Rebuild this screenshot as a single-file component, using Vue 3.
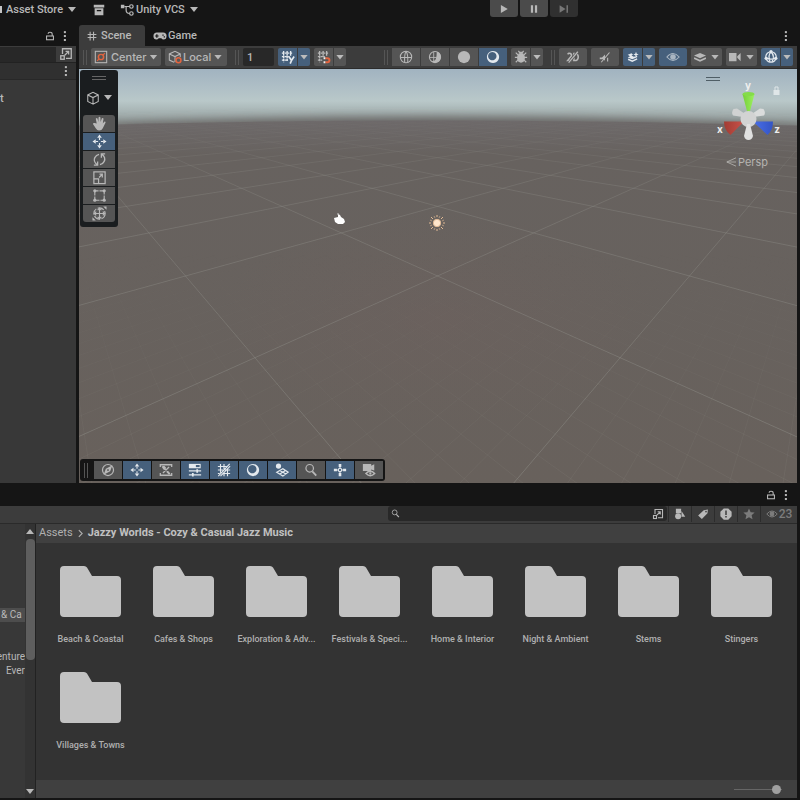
<script setup>
import { ref } from 'vue'

const icons = {
  archive: '<path fill="currentColor" d="M2 2h12v3H2zM3 6h10v8H3z"/><path stroke="#151515" stroke-width="1.5" d="M5.5 8.7h5"/>',
  branch: '<rect x="1" y="2" width="4" height="4" fill="currentColor"/><g fill="none" stroke="currentColor" stroke-width="1.4"><path d="M5 4h6M7 4v4q0 4 4 4"/><circle cx="13" cy="4" r="2"/><circle cx="13" cy="12" r="2"/></g>',
  play: '<path fill="currentColor" d="M3 1.500 14 8 3 14.500z"/>',
  pause: '<path fill="currentColor" d="M3 2h3.500v12H3zM9.500 2H13v12H9.500z"/>',
  step: '<path fill="currentColor" d="M1 2l9.500 6L1 14zM12 2h2.300v12H12z"/>',
  lock: '<g fill="none" stroke="currentColor" stroke-width="1.700"><rect x="2.500" y="8" width="11" height="6"/><path d="M5 4.500Q5 2 8 2q3.500 0 3.500 3v3"/></g>',
  dots: '<g fill="currentColor"><rect x="6.500" y="1.500" width="2.700" height="2.700"/><rect x="6.500" y="6.700" width="2.700" height="2.700"/><rect x="6.500" y="12" width="2.700" height="2.700"/></g>',
  picker: '<g fill="none" stroke="currentColor" stroke-width="1.500"><path d="M4 8V2h10v11H8"/><rect x="2" y="10" width="4" height="4"/><path d="M6.500 9.500 11 5M7.500 5H11v3.700"/></g>',
  hash: '<path stroke="currentColor" stroke-width="1.700" d="M5 1v14M10.500 1v14M1 5.500h14M1 10.500h14"/>',
  pad: '<path fill="currentColor" fill-rule="evenodd" d="M4.500 4h7q4 0 4 4 0 4-3.500 4-1.500 0-2.500-1.500h-3Q5.500 12 4 12 .5 12 .5 8q0-4 4-4zM3.700 6v1.300H2.500v1.400h1.200V10h1.400V8.700h1.300V7.300H5.100V6zm7 .3v1.500h1.500V6.300zm1.500 2v1.500h1.500V8.300z"/>',
  center: '<rect x="1.500" y="1.500" width="13" height="13" fill="none" stroke="currentColor" stroke-width="1.200"/><circle cx="8" cy="8" r="3" fill="none" stroke="#e2643f" stroke-width="1.700"/><path stroke="#e2643f" stroke-width="1.300" d="M3.500 12.500 6 10M10 6l2.500-2.500"/>',
  local: '<path fill="none" stroke="currentColor" stroke-width="1.200" d="M7 14 1.500 11.500v-7L8 1.500l6 3V8M1.500 4.500 8 7.500l6-3M8 7.500V14"/><circle cx="12" cy="11.700" r="2.800" fill="#585858" stroke="#e2643f" stroke-width="1.700"/>',
  cube: '<path fill="none" stroke="currentColor" stroke-width="1.200" d="M8 15 2 12V4.500L8 1.500l6 3V12zM2 4.500l6 3 6-3M8 7.500V15"/>',
  gridY: '<path stroke="currentColor" stroke-width="1.500" stroke-dasharray="2.400 .7" d="M3 1v13M7 1v12M11 1v6M1 3.500h12M1 7.500h8M1 11.500h7"/><path fill="none" stroke="currentColor" stroke-width="1.900" d="M9 7.500l3 4.500 3-4.500M12 12l-1.500 3.500"/>',
  magnet: '<path stroke="currentColor" stroke-width="1.500" stroke-dasharray="2.400 .7" d="M3 1v13M7 1v7M11 1v6M1 3.500h12M1 7.500h8M1 11.500h5"/><path fill="none" stroke="#e2643f" stroke-width="2.300" d="M9.500 9.500H12q2.200 0 2.200 2.200T12 14H9.500"/><path stroke="#eee" stroke-width="2.200" d="M7.500 9.500h2M7.500 14h2"/>',
  wire: '<g fill="none" stroke="currentColor" stroke-width="1.200"><circle cx="8" cy="8" r="6.500"/><path d="M8 1.500Q6 5 6.500 14M1.500 8.500h13M8 1.500q2.500 3 2 12.500"/></g>',
  shadedWire: '<circle cx="8" cy="8" r="6.400" fill="none" stroke="currentColor" stroke-width="1.200"/><path fill="currentColor" d="M10 2q5 1 4.500 7-1 5-6.500 5.500L3 13q5 0 6-3t1-8z"/><path stroke="currentColor" d="M1.500 8.500H10M6.500 2v12"/>',
  ball: '<circle cx="8" cy="8" r="7" fill="currentColor"/>',
  moon: '<path fill="currentColor" fill-rule="evenodd" d="M8 1a7 7 0 1 0 .01 0zM7.200 2.200a4.800 4.800 0 1 1-.01 0z"/>',
  bug: '<ellipse cx="8" cy="9" rx="4.500" ry="5.500" fill="currentColor"/><path fill="currentColor" d="M5 4h6L9.800 2H6.200z"/><path fill="none" stroke="currentColor" stroke-width="1.300" d="M1 8.500h14M2 3l3 3M14 3l-3 3M2 14l3-3M14 14l-3-3M5 1l1.500 2M11 1 9.500 3"/>',
  twoD: '<path fill="none" stroke="currentColor" stroke-width="1.800" d="M2 5q1-2 3-1t1 3l-4 5h5M9 4q5-.5 5 4t-5 4z"/><path stroke="#585858" stroke-width="3" d="M3 15 14 1"/><path stroke="currentColor" stroke-width="1.400" d="M3 14.500 13.500 2"/>',
  mute: '<path fill="currentColor" d="M1 8.500h3l4-4V13l-2-2H1z"/><path fill="none" stroke="currentColor" stroke-width="1.500" d="M11.500 9v5M3 15 14 2"/>',
  fx: '<path fill="currentColor" d="M1 5l5-2 2 2-2 1 3 1.500 4-1L14 8 7 11 1 8.500 4 7zM12 1l1 2.500L15.500 4.500 13 5.500 12 8l-1-2.500L8.500 4.500 11 3.500z"/><path fill="none" stroke="currentColor" stroke-width="2" d="M1.500 11 7 13.500l6.500-3"/>',
  eye: '<path fill="none" stroke="currentColor" stroke-width="1.300" d="M1 8q7-8 14 0-7 8-14 0z"/><circle cx="8" cy="8" r="3.200" fill="currentColor"/>',
  layers: '<path fill="currentColor" d="M0 6l8-3.500L16 6 8 9.500z"/><path fill="none" stroke="currentColor" stroke-width="2.300" d="M0 9.500 8 13l8-3.500"/>',
  camera: '<path fill="currentColor" d="M0 2.500h10v11H0zM11 7l4.500-4.500v11L11 9z"/>',
  globe: '<g fill="none" stroke="currentColor" stroke-width="1.400"><circle cx="8" cy="8" r="6"/><path d="M8 2Q4 6 7 14M2 9q6 3 12 0M8 2q5 5 1 12"/></g><g fill="currentColor"><circle cx="8" cy="2" r="1.900"/><circle cx="2.500" cy="9.500" r="1.900"/><circle cx="13.500" cy="9.500" r="1.900"/></g>',
  hand: '<path fill="currentColor" d="M5 8 4 3q1-1.500 2 0l.7 3.500L7 1.500q1-1.300 2 0l.2 5L10.500 2.500q1.300-.8 1.800.4L11.500 8l1.500-2q1.600-.4 1.500.8L11.500 13q-1 2.500-4 2.500-2 0-3.500-2.500L1 8.500q.2-1.600 1.800-1z"/>',
  move: '<g fill="currentColor"><path d="M8 .5 10.500 4h-5zM8 15.500 10.500 12h-5zM.5 8 4 5.500v5zM15.500 8 12 5.500v5z"/><path d="M7.400 4h1.200v2.500H7.400zM7.400 9.500h1.200V12H7.400zM4 7.400h2.500v1.200H4zM9.500 7.400H12v1.200H9.500z"/></g>',
  rotate: '<g fill="none" stroke="currentColor" stroke-width="1.400"><path d="M5.500 13.500Q1 10 3 6q1.500-3 4.500-3.500M10.500 2.500Q15 6 13 10q-1.500 3-4.500 3.500M2 14h4v-4M14 2h-4v4"/></g>',
  scale: '<g fill="none" stroke="currentColor" stroke-width="1.300"><rect x="2" y="2" width="12" height="12.500"/><path d="M2 9.500h5v5M7.500 8l3.500-3.500M8 4.500h3V8"/></g>',
  rect: '<path fill="none" stroke="currentColor" stroke-width="1.200" stroke-dasharray="4 1" d="M3 3h10v10H3z"/><g fill="currentColor"><circle cx="3" cy="3" r="1.700"/><circle cx="13" cy="3" r="1.700"/><circle cx="3" cy="13" r="1.700"/><circle cx="13" cy="13" r="1.700"/></g>',
  combo: '<g fill="none" stroke="currentColor" stroke-width="1.200"><circle cx="8" cy="8" r="6" stroke-dasharray="7 1.500"/><path d="M8 2.500v11M2.500 8h11M6 4.500l2-2 2 2M6 11.500l2 2 2-2M4.500 6l-2 2 2 2M11.500 6l2 2-2 2"/></g><path fill="currentColor" d="M15.500.5v3.500L12 .5zM.5 15.500V12L4 15.500z"/>',
  compass: '<circle cx="8" cy="8" r="6.300" fill="none" stroke="currentColor" stroke-width="1.400"/><path fill="currentColor" fill-rule="evenodd" d="M13 2.500 10.500 9.500 3 13.500 5.500 6.500zM8 7a1 1 0 1 0 .01 0z"/>',
  tools: '<path fill="none" stroke="currentColor" stroke-width="1.500" d="M1.500 4.500V2h13v2.500M1.500 11.500V14h13v-2.500M4.500 11.500l7-7M4.500 4.500l7 7"/><path fill="currentColor" d="M3 4l3-1 2 2-1 3-2-.5zM10 9l3 3-1.500 1.500-3-3z"/>',
  sliders: '<path fill="currentColor" d="M1 1h13.500v5H1z"/><path fill="#46607c" d="M9 2.300h4.300v2.400H9z"/><path stroke="currentColor" stroke-width="1.500" d="M1 9h14M1 13.500h14"/><path fill="currentColor" d="M9.500 7h2v4h-2zM4.500 11.500h2v4h-2z"/>',
  gridCut: '<path stroke="currentColor" stroke-width="1.300" d="M4 1v10M8 1v6M12 6v9M8 11v4M1 4h10M1 8h6M1 12h2M6 12h9M9 8h6M1.500 15 14.500 1M4 15 15 3.500"/>',
  particles: '<circle cx="4" cy="3.500" r="3" fill="currentColor"/><g fill="none" stroke="currentColor" stroke-width="1.400"><path d="M2 10.500 9 6.500l6 4-6 4.500zM5.500 8.500l7 4M12 8.500l-6.500 4"/></g>',
  search: '<circle cx="6.500" cy="6" r="4.300" fill="none" stroke="currentColor" stroke-width="1.400"/><path stroke="currentColor" stroke-width="2" d="m9.500 9.500 4.500 5"/>',
  cross: '<g fill="currentColor"><path d="M6.500 1h3v3.500h-3zM6.500 11.500h3V15h-3zM1 6.500h3.500v3H1zM11.500 6.500H15v3h-3.500z"/></g><circle cx="8" cy="8" r="1.900" fill="none" stroke="currentColor" stroke-width="1.200"/><path stroke="currentColor" stroke-width="1.200" d="M8 4v2.500M8 9.500V12M4 8h2.500M9.500 8H12"/>',
  camEye: '<path fill="currentColor" d="M1 1h9.500v2L14 1.500v7L10.500 7.500V9H1z"/><path fill="none" stroke="currentColor" stroke-width="1.600" d="M4.500 12q5-5 10 0-5 5-10 0z"/><circle cx="9.500" cy="12" r="1.300" fill="currentColor"/>',
  shapes: '<path fill="currentColor" d="M2.500 1h7v6h-7zM10 4l5 7.500h-5z"/><circle cx="5.500" cy="11" r="4" fill="currentColor"/>',
  tag: '<path fill="currentColor" fill-rule="evenodd" d="M9 3l5.500-1L14 7l-7.500 7.500L1.500 10zM12 3.800a1 1 0 1 0 .01 0z"/>',
  alert: '<path fill="currentColor" fill-rule="evenodd" d="M5 .5h6L15.500 5v6L11 15.500H5L.5 11V5zM7 3.200v6h2v-6zM7 10.800v2h2v-2z"/>',
  star: '<path fill="currentColor" d="m8 .5 2.200 5 5.300.5-4 3.600 1.200 5.400L8 12.200 3.300 15l1.200-5.400L.5 6l5.300-.5z"/>',
}

const viewModes = ['wire', 'shadedWire', 'ball', 'moon']
const tools = ['hand', 'move', 'rotate', 'scale', 'rect', 'combo']
const overlays = [
  ['compass', false], ['move', true], ['tools', false], ['sliders', true], ['gridCut', true],
  ['moon', true], ['particles', true], ['search', false], ['cross', true], ['camEye', false],
]
const folders = [
  'Beach & Coastal', 'Cafes & Shops', 'Exploration & Adv...', 'Festivals & Speci...',
  'Home & Interior', 'Night & Ambient', 'Stems', 'Stingers', 'Villages & Towns',
]
const filters = [['shapes', 'Filter by type'], ['tag', 'Filter by label'], ['alert', 'Filter by import log'], ['star', 'Save search']]

const gridSize = ref('1')
const hierarchyQuery = ref('')
const projectQuery = ref('')
const thumbSize = ref(100)

// Ground-plane projection: i and j run along the two diagonal axes of the grid.
function project(i, j) {
  const s = 1 / (0.003968 + 0.00123 * (i + j))
  return `${(437.5 + ((i - j) / 2) * s).toFixed(1)} ${(94 + 0.722 * s).toFixed(1)}`
}
function gridPath(step, limit, far) {
  let d = ''
  for (let n = -limit; n <= limit; n++) {
    const v = n * step
    d += `M${project(v, -3 - v)}L${project(v, far - v)}M${project(-3 - v, v)}L${project(far - v, v)}`
  }
  return d
}
const majorGrid = gridPath(1, 44, 30)
const minorGrid = gridPath(0.1, 80, 3)
</script>

<template>
  <div class="editor">
    <header class="topbar">
      <button class="plain store"><span class="store-icon"></span><span>Asset Store</span><i class="caret"></i></button>
      <button class="plain archive" aria-label="Package manager"><svg class="ic ic14" viewBox="0 0 16 16" v-html="icons.archive"></svg></button>
      <button class="plain vcs"><svg class="ic ic14" viewBox="0 0 16 16" v-html="icons.branch"></svg><span>Unity VCS</span><i class="caret"></i></button>
      <div class="transport">
        <button aria-label="Play"><svg class="ic ic10" viewBox="0 0 16 16" v-html="icons.play"></svg></button>
        <button aria-label="Pause"><svg class="ic ic10" viewBox="0 0 16 16" v-html="icons.pause"></svg></button>
        <button class="off" aria-label="Step"><svg class="ic ic10" viewBox="0 0 16 16" v-html="icons.step"></svg></button>
      </div>
    </header>

    <div class="upper">
      <aside class="hierarchy">
        <div class="panel-tabs">
          <button class="plain" aria-label="Lock"><svg class="ic ic10" viewBox="0 0 16 16" v-html="icons.lock"></svg></button>
          <button class="plain" aria-label="Menu"><svg class="ic ic12" viewBox="0 0 16 16" v-html="icons.dots"></svg></button>
        </div>
        <div class="hier-search">
          <input v-model="hierarchyQuery" aria-label="Search hierarchy">
          <button class="plain" aria-label="Open search"><svg class="ic ic14" viewBox="0 0 16 16" v-html="icons.picker"></svg></button>
        </div>
        <div class="hier-row"><button class="plain" aria-label="Scene menu"><svg class="ic ic12" viewBox="0 0 16 16" v-html="icons.dots"></svg></button></div>
        <div class="hier-body">t</div>
      </aside>

      <main class="scene-panel">
        <div class="tabs">
          <button class="tab on"><svg class="ic ic10" viewBox="0 0 16 16" v-html="icons.hash"></svg>Scene</button>
          <button class="tab"><svg class="ic ic14" viewBox="0 0 16 16" v-html="icons.pad"></svg>Game</button>
          <button class="plain tabs-menu" aria-label="Menu"><svg class="ic ic12" viewBox="0 0 16 16" v-html="icons.dots"></svg></button>
        </div>

        <div class="toolbar">
          <div class="cluster">
            <i class="grip"></i>
            <button class="tb pivot"><svg class="ic ic14" viewBox="0 0 16 16" v-html="icons.center"></svg><span>Center</span><i class="caret"></i></button>
            <button class="tb pivot space"><svg class="ic ic14" viewBox="0 0 16 16" v-html="icons.local"></svg><span>Local</span><i class="caret"></i></button>
          </div>
          <div class="cluster">
            <i class="grip"></i>
            <input v-model="gridSize" class="num" aria-label="Grid size">
            <div class="split blue"><button aria-label="Grid"><svg class="ic ic14" viewBox="0 0 16 16" v-html="icons.gridY"></svg></button><button aria-label="Grid options"><i class="caret"></i></button></div>
            <div class="split"><button aria-label="Snap"><svg class="ic ic14" viewBox="0 0 16 16" v-html="icons.magnet"></svg></button><button aria-label="Snap options"><i class="caret"></i></button></div>
          </div>
          <div class="cluster view">
            <i class="grip"></i>
            <div class="modes">
              <button v-for="m in viewModes" :key="m" :class="{ blue: m === 'moon' }" :aria-label="m"><svg class="ic ic14" viewBox="0 0 16 16" v-html="icons[m]"></svg></button>
            </div>
            <div class="split"><button aria-label="Debug"><svg class="ic ic14" viewBox="0 0 16 16" v-html="icons.bug"></svg></button><button aria-label="Debug options"><i class="caret"></i></button></div>
          </div>
          <div class="cluster">
            <i class="grip"></i>
            <button class="tb wide" aria-label="2D"><svg class="ic ic14" viewBox="0 0 16 16" v-html="icons.twoD"></svg></button>
            <button class="tb wide" aria-label="Audio"><svg class="ic ic12" viewBox="0 0 16 16" v-html="icons.mute"></svg></button>
            <div class="split blue"><button aria-label="Effects"><svg class="ic ic12" viewBox="0 0 16 16" v-html="icons.fx"></svg></button><button aria-label="Effect options"><i class="caret"></i></button></div>
            <button class="tb wide blue soft" aria-label="Visibility"><svg class="ic ic14" viewBox="0 0 16 16" v-html="icons.eye"></svg></button>
            <button class="tb drop" aria-label="Layers"><svg class="ic ic12" viewBox="0 0 16 16" v-html="icons.layers"></svg><i class="caret"></i></button>
            <button class="tb drop" aria-label="Camera"><svg class="ic ic12" viewBox="0 0 16 16" v-html="icons.camera"></svg><i class="caret"></i></button>
            <div class="split blue"><button aria-label="Gizmos"><svg class="ic ic14" viewBox="0 0 16 16" v-html="icons.globe"></svg></button><button aria-label="Gizmo options"><i class="caret"></i></button></div>
          </div>
        </div>

        <div class="viewport">
          <svg class="world" viewBox="79 69 718 414" preserveAspectRatio="xMidYMid slice" aria-hidden="true">
            <defs>
              <linearGradient id="sky" gradientUnits="userSpaceOnUse" x1="0" y1="69" x2="0" y2="122">
                <stop offset="0" stop-color="#a1b3c0" /><stop offset=".35" stop-color="#afbfc6" />
                <stop offset=".6" stop-color="#b9c8c9" /><stop offset="1" stop-color="#96a09f" />
              </linearGradient>
              <linearGradient id="ground" gradientUnits="userSpaceOnUse" x1="0" y1="118" x2="0" y2="483">
                <stop offset="0" stop-color="#6e6a6b" /><stop offset=".1" stop-color="#67625f" /><stop offset="1" stop-color="#68615c" />
              </linearGradient>
              <radialGradient id="warm"><stop offset="0" stop-color="#70605d" stop-opacity=".35" /><stop offset="1" stop-color="#70605d" stop-opacity="0" /></radialGradient>
              <linearGradient id="fade" gradientUnits="userSpaceOnUse" x1="0" y1="122" x2="0" y2="240">
                <stop offset="0" stop-color="#fff" stop-opacity=".1" /><stop offset=".5" stop-color="#fff" stop-opacity=".75" /><stop offset="1" stop-color="#fff" />
              </linearGradient>
              <linearGradient id="fadeNear" gradientUnits="userSpaceOnUse" x1="0" y1="250" x2="0" y2="480">
                <stop offset="0" stop-color="#fff" stop-opacity="0" /><stop offset="1" stop-color="#fff" />
              </linearGradient>
              <mask id="far" maskUnits="userSpaceOnUse" x="0" y="121" width="900" height="400"><rect x="0" y="121" width="900" height="400" fill="url(#fade)" /></mask>
              <mask id="near" maskUnits="userSpaceOnUse" x="0" y="121" width="900" height="400"><rect x="0" y="121" width="900" height="400" fill="url(#fadeNear)" /></mask>
              <filter id="haze" x="-10%" y="-20%" width="120%" height="140%"><feGaussianBlur stdDeviation="5" /></filter>
            </defs>
            <rect x="0" y="0" width="900" height="600" fill="url(#sky)" />
            <path d="M-40 131Q437 103 920 131V560H-40z" fill="#676563" filter="url(#haze)" />
            <path d="M0 128Q437 113 875 128V600H0z" fill="url(#ground)" />
            <ellipse cx="437" cy="320" rx="220" ry="110" fill="url(#warm)" />
            <path :d="minorGrid" fill="none" stroke="#a5a49c" stroke-opacity=".1" mask="url(#near)" />
            <path :d="majorGrid" fill="none" stroke="#96968f" stroke-opacity=".34" mask="url(#far)" />
            <path fill="#fff" d="M334 218l4-1 0-3 2 1 1 2 3 2 1 3-2 2h-5l-3-2z" /><path stroke="#ccc" d="M338 213v2" />
            <g transform="translate(437 223)" stroke="#e0b994"><circle r="3.700" fill="#ffe6cc" /><path d="M0-8v2M0 8V6M-8 0h2M8 0H6M-6-6l2 2M6-6 4-4M-6 6l2-2M6 6 4 4" /><path stroke-opacity=".6" d="M-3-7l1 2M3-7 2-5M-3 7l1-2M3 7 2 5M-7-3l2 1M7-3 5-2M-7 3l2-1M7 3 5 2" /></g>
          </svg>

          <div class="tool-palette">
            <i class="hgrip"></i>
            <button class="plain shape" aria-label="Tool mode"><svg class="ic ic14" viewBox="0 0 16 16" v-html="icons.cube"></svg><i class="caret"></i></button>
            <div class="tool-list">
              <button v-for="t in tools" :key="t" :class="{ blue: t === 'move' }" :aria-label="t"><svg class="ic ic15" viewBox="0 0 16 16" v-html="icons[t]"></svg></button>
            </div>
          </div>

          <div class="orient">
            <svg class="axes" viewBox="0 0 80 80" role="img" aria-label="Orientation gizmo">
              <defs>
                <linearGradient id="ax-r"><stop offset="0" stop-color="#a23c33" /><stop offset="1" stop-color="#c9524a" /></linearGradient>
                <linearGradient id="ax-b"><stop offset="0" stop-color="#4a6fe8" /><stop offset="1" stop-color="#3354c4" /></linearGradient>
                <linearGradient id="ax-g"><stop offset="0" stop-color="#76cf3a" /><stop offset="1" stop-color="#9cf060" /></linearGradient>
              </defs>
              <path d="M6 8.500h14M6 11.500h14" stroke="#4f5e66" />
              <path d="M43 48 33 46.500q-2-3 .5-6.500l3.500-.5 9 6z" fill="#d0d2d2" />
              <path d="M53 48l11-1.500q2-3-.5-6.500L60 39.500l-9 6z" fill="#dadcdc" />
              <path d="M42.500 25h12l-5 19h-2z" fill="url(#ax-g)" /><ellipse cx="48.500" cy="25" rx="6" ry="2" fill="#84dc49" />
              <path d="M24 52.500h20L30.500 66Q24 61 24 52.500z" fill="url(#ax-r)" />
              <path d="M53 52.500h20q0 9-5.500 13.500z" fill="url(#ax-b)" />
              <circle cx="48.500" cy="50" r="8" fill="#d2d3d3" />
              <path d="M47 55h3l3 12q-1 4-4.500 4T44 67z" fill="#e0e0e0" />
              <text x="48" y="20">y</text><text x="20" y="64">x</text><text x="77" y="64">z</text>
              <g fill="#dfe6e8"><rect x="73.500" y="21" width="6" height="5" /><path d="M75 21v-3h3v3" fill="none" stroke="#dfe6e8" /></g>
            </svg>
            <button class="plain persp"><svg class="ic ic10" viewBox="0 0 12 12"><path fill="none" stroke="currentColor" d="M12 1 1 6l11 5M1 6h11" /></svg>Persp</button>
          </div>

          <div class="overlay-bar">
            <i class="grip"></i>
            <div class="modes">
              <button v-for="[name, on] in overlays" :key="name" :class="{ blue: on }" :aria-label="name"><svg class="ic ic14" viewBox="0 0 16 16" v-html="icons[name]"></svg></button>
            </div>
          </div>
        </div>
      </main>
    </div>

    <section class="project">
      <div class="panel-tabs">
        <button class="plain" aria-label="Lock"><svg class="ic ic10" viewBox="0 0 16 16" v-html="icons.lock"></svg></button>
        <button class="plain" aria-label="Menu"><svg class="ic ic12" viewBox="0 0 16 16" v-html="icons.dots"></svg></button>
      </div>
      <div class="project-bar">
        <label class="find">
          <svg class="ic ic9" viewBox="0 0 16 16" v-html="icons.search"></svg>
          <input v-model="projectQuery" aria-label="Search project">
          <button class="plain" aria-label="Open search"><svg class="ic ic12" viewBox="0 0 16 16" v-html="icons.picker"></svg></button>
        </label>
        <button v-for="[name, label] in filters" :key="name" class="filter" :class="{ dim: name === 'star' }" :aria-label="label"><svg class="ic ic12" viewBox="0 0 16 16" v-html="icons[name]"></svg></button>
        <button class="filter dim count"><svg class="ic ic12" viewBox="0 0 16 16" v-html="icons.eye"></svg><span>23</span></button>
      </div>
      <div class="project-main">
        <nav class="tree">
          <div class="tree-items"><a href="#" class="sel">&amp; Ca</a><a href="#">enture</a><a href="#">Ever</a></div>
          <div class="scroll"><i class="caret up"></i><i class="thumb"></i><i class="caret down"></i></div>
        </nav>
        <div class="browser">
          <div class="crumbs"><a href="#">Assets</a><svg class="chev" viewBox="0 0 6 10"><path fill="none" stroke="currentColor" stroke-width="1.300" d="m1 1 4 4-4 4" /></svg><b>Jazzy Worlds - Cozy &amp; Casual Jazz Music</b></div>
          <div class="files">
            <a v-for="f in folders" :key="f" href="#" class="folder">
              <svg viewBox="0 0 61 51" aria-hidden="true"><path fill="#c2c2c2" d="M4 0h20q2 0 3 1.500l5 8.500h25q4 0 4 4v33q0 4-4 4H4q-4 0-4-4V4q0-4 4-4z" /></svg>
              <span>{{ f }}</span>
            </a>
          </div>
          <div class="footer"><input v-model="thumbSize" type="range" min="0" max="104" aria-label="Thumbnail size"></div>
        </div>
      </div>
    </section>
  </div>
</template>

<style>
body { background: #151515; }
</style>

<style scoped>
* { box-sizing: border-box; }
.editor { display: flex; flex-direction: column; min-height: 100vh; padding-right: 3px; padding-bottom: 2px; background: #151515; color: #b8b8b8; font: 500 11px/14px Roboto, "Liberation Sans", sans-serif; overflow: hidden; }
button, input { font: inherit; color: inherit; border: 0; margin: 0; padding: 0; min-width: 0; }
button { background: #555; display: flex; align-items: center; justify-content: center; }
a { color: inherit; text-decoration: none; }
.plain { background: none; }
.ic { display: block; flex: none; }
.ic9 { width: 9px; height: 9px; }
.ic10 { width: 10px; height: 10px; }
.ic12 { width: 12px; height: 12px; }
.ic14 { width: 14px; height: 14px; }
.ic15 { width: 15px; height: 15px; }
.caret { flex: none; width: 8px; height: 5px; background: currentColor; clip-path: polygon(0 0, 100% 0, 50% 100%); }
.blue { background: #46607c; color: #e4e9ee; }
.blue.soft { color: #aab6c2; }
.grip { flex: none; width: 4px; height: 15px; border: 1px solid #555; border-width: 0 1px; }

.topbar { display: flex; align-items: flex-start; height: 25px; }
.topbar .plain { height: 19px; }
.topbar .caret { margin-left: auto; }
.store { gap: 4px; width: 76px; justify-content: flex-start; }
.store-icon { width: 2px; height: 7px; background: #c4c4c4; }
.archive { margin-left: 16px; }
.vcs { width: 78px; margin-left: 14px; gap: 2px; justify-content: flex-start; }
.transport { display: flex; gap: 2px; margin-left: 292px; }
.transport button { width: 28px; height: 17px; border-radius: 0 0 3px 3px; background: #4b4b4b; }
.transport .off { background: #303030; color: #777; }

.upper { display: flex; flex: 1; min-height: 458px; }
.hierarchy { display: flex; flex-direction: column; width: 76px; background: #383838; }
.panel-tabs { display: flex; align-items: center; justify-content: flex-end; gap: 4px; height: 21px; padding-right: 5px; background: #151515; }
.hier-search { display: flex; align-items: center; height: 17px; background: #3c3c3c; border-bottom: 1px solid #222; }
.hier-search input { flex: 1; height: 15px; background: #282828; }
.hier-search button { width: 20px; }
.hier-row { display: flex; align-items: center; justify-content: flex-end; height: 17px; padding-right: 4px; background: #303030; border-bottom: 1px solid #282828; }
.hier-body { flex: 1; padding-top: 12px; }

.scene-panel { display: flex; flex-direction: column; flex: 1; min-width: 0; padding-left: 3px; }
.tabs { display: flex; height: 21px; }
.tab { gap: 4px; background: none; padding: 0 8px; justify-content: flex-start; }
.tab:nth-child(2) { gap: 1px; }
.tab.on { width: 66px; background: #3c3c3c; border-radius: 3px 3px 0 0; }
.tabs-menu { margin-left: auto; padding-right: 5px; }
.toolbar { display: flex; align-items: center; height: 23px; padding: 0 4px; background: #3c3c3c; border-bottom: 1px solid #2c2c2c; }
.cluster { display: flex; align-items: center; gap: 4px; }
.cluster + .cluster { margin-left: 8px; }
.cluster + .view { margin-left: auto; }
.tb { height: 18px; border-radius: 2px; }
.pivot { gap: 3px; width: 70px; padding: 0 5px 0 3px; justify-content: flex-start; font: 500 11px/14px Inter, sans-serif; }
.pivot.space { width: 62px; gap: 1px; }
.pivot .caret { margin-left: auto; }
.wide { width: 28px; }
.drop { width: 31px; gap: 5px; }
.num { width: 31px; height: 18px; padding-left: 4px; background: #282828; border-radius: 2px; }
.split { display: flex; gap: 1px; background: none; }
.split button { width: 19px; height: 18px; border-radius: 2px 0 0 2px; }
.split button + button { width: 12px; border-radius: 0 2px 2px 0; color: #bcbcbc; }
.split.blue button { background: #46607c; }
.modes { display: flex; gap: 1px; }
.modes button { width: 28px; height: 18px; }

.viewport { position: relative; flex: 1; overflow: hidden; background: #67625d; }
.world { position: absolute; inset: 0; width: 100%; height: 100%; }
.tool-palette { position: absolute; left: 1px; top: 1px; display: flex; flex-direction: column; align-items: center; width: 38px; padding: 6px 2px 5px; border-radius: 3px; background: #1a1d1f; }
.hgrip { width: 14px; height: 4px; border: 1px solid #666; border-width: 1px 0; }
.shape { height: 35px; gap: 4px; }
.tool-list { display: flex; flex-direction: column; gap: 1px; border-radius: 3px; overflow: hidden; }
.tool-list button { width: 32px; height: 17px; }
.overlay-bar { position: absolute; left: 1px; bottom: 2px; display: flex; align-items: center; gap: 6px; padding: 2px 2px 2px 4px; border-radius: 3px; background: #151515; }
.orient { position: absolute; right: 16px; top: 0; display: flex; flex-direction: column; align-items: center; width: 82px; }
.axes { width: 80px; height: 80px; }
.axes text { fill: #eee; font: 700 10px Inter, sans-serif; text-anchor: middle; }
.persp { gap: 2px; margin-top: 6px; margin-left: 14px; color: #b5b3b0; font-family: Inter, sans-serif; font-weight: 400; }

.project { display: flex; flex-direction: column; height: 315px; }
.project .panel-tabs { height: 23px; }
.project-bar { display: flex; justify-content: flex-end; height: 18px; padding-bottom: 1px; background: #3c3c3c; border-bottom: 1px solid #2a2a2a; }
.find { display: flex; align-items: center; width: 279px; height: 15px; margin-right: 1px; padding: 0 3px; border-radius: 3px; background: #282828; }
.find input { flex: 1; background: none; }
.filter { width: 23px; background: none; border-left: 1px solid #2c2c2c; }
.filter.dim { color: #7c7c7c; }
.filter.count { width: 37px; gap: 1px; font-size: 12px; }
.project-main { display: flex; flex: 1; min-height: 0; }
.tree { display: flex; width: 36px; background: #383838; border-right: 1px solid #222; overflow: hidden; }
.tree-items { display: grid; grid-template: 42px 14px 14px / 25px; align-content: start; justify-items: end; flex: none; width: 25px; padding-top: 84px; font-size: 10px; font-weight: 400; white-space: nowrap; overflow: hidden; }
.tree-items .sel { width: 25px; height: 14px; padding-left: 1px; background: #4d4d4d; }
.scroll { display: flex; flex-direction: column; align-items: center; flex: 1; padding: 5px 0 4px; background: #333; }
.up { transform: rotate(180deg); }
.thumb { width: 9px; height: 121px; margin-top: 5px; border-radius: 4px; background: #5e5e5e; }
.down { margin-top: auto; }
.browser { display: flex; flex-direction: column; flex: 1; background: #333; }
.crumbs { display: flex; align-items: center; gap: 5px; height: 19px; padding: 0 0 1px 3px; background: #404040; color: #b0b0b0; font-weight: 400; }
.crumbs b { font-weight: 700; color: #c0c0c0; }
.chev { width: 5px; height: 9px; }
.files { display: grid; grid-template-columns: repeat(auto-fill, 93px); grid-auto-rows: 106px; align-content: start; flex: 1; padding: 23px 0 0 8px; }
.folder { display: flex; flex-direction: column; align-items: center; gap: 15px; color: #b0b0b0; font-size: 9px; white-space: nowrap; }
.folder svg { width: 61px; height: 51px; }
.footer { display: flex; align-items: center; justify-content: flex-end; height: 18px; padding-right: 15px; background: #404040; }
.footer input { appearance: none; width: 48px; height: 10px; background: linear-gradient(#666, #666) center / 100% 1px no-repeat; }
.footer input::-webkit-slider-thumb { appearance: none; width: 9px; height: 9px; border-radius: 50%; background: #a0a0a0; }
</style>
